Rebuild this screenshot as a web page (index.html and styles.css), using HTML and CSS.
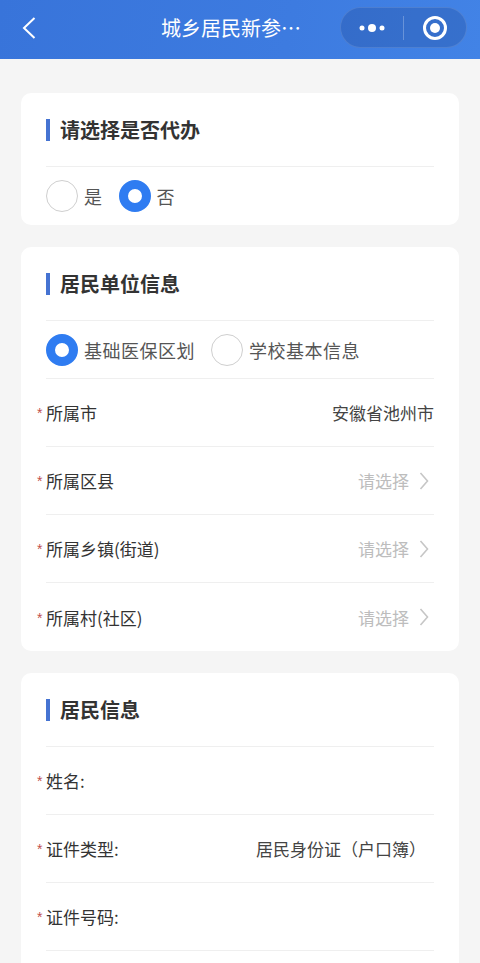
FILE: index.html
```html
<!DOCTYPE html>
<html>
<head>
    <title>城乡居民新参保登记</title>
    <link rel="stylesheet" href="styles.css">
</head>
<body>
    <div class="navbar">
        <svg class="back" width="14" height="22" viewBox="0 0 14 22">
            <polyline points="12.5,1 2,11 12.5,21" fill="none" stroke="#fff" stroke-width="2"/>
        </svg>
        <div class="nav-title">城乡居民新参…</div>
        <div class="capsule">
            <div class="capsule-btn">
                <svg width="26" height="10" viewBox="0 0 26 10">
                    <circle cx="3" cy="5" r="2.5" fill="#fff"/>
                    <circle cx="13" cy="5" r="4" fill="#fff"/>
                    <circle cx="23" cy="5" r="2.5" fill="#fff"/>
                </svg>
            </div>
            <div class="capsule-line"></div>
            <div class="capsule-btn">
                <svg width="26" height="26" viewBox="0 0 26 26">
                    <circle cx="13" cy="13" r="10.5" fill="none" stroke="#fff" stroke-width="3"/>
                    <circle cx="13" cy="13" r="5" fill="#fff"/>
                </svg>
            </div>
        </div>
    </div>

    <div class="page">
        <!-- 是否代办 -->
        <div class="card">
            <div class="card-title"><span class="bar"></span>请选择是否代办</div>
            <div class="radio-row">
                <span class="radio"></span><span class="radio-text">是</span>
                <span class="radio checked"></span><span class="radio-text">否</span>
            </div>
        </div>

        <!-- 居民单位信息 -->
        <div class="card">
            <div class="card-title"><span class="bar"></span>居民单位信息</div>
            <div class="radio-row line">
                <span class="radio checked"></span><span class="radio-text">基础医保区划</span>
                <span class="radio"></span><span class="radio-text">学校基本信息</span>
            </div>
            <div class="row">
                <div class="label"><span class="star">*</span>所属市</div>
                <div class="value">安徽省池州市</div>
            </div>
            <div class="row">
                <div class="label"><span class="star">*</span>所属区县</div>
                <div class="picker">请选择<svg width="10" height="18" viewBox="0 0 10 18"><polyline points="1.5,1 8.5,9 1.5,17" fill="none" stroke="#c6c6c6" stroke-width="1.6"/></svg></div>
            </div>
            <div class="row">
                <div class="label"><span class="star">*</span>所属乡镇(街道)</div>
                <div class="picker">请选择<svg width="10" height="18" viewBox="0 0 10 18"><polyline points="1.5,1 8.5,9 1.5,17" fill="none" stroke="#c6c6c6" stroke-width="1.6"/></svg></div>
            </div>
            <div class="row">
                <div class="label"><span class="star">*</span>所属村(社区)</div>
                <div class="picker">请选择<svg width="10" height="18" viewBox="0 0 10 18"><polyline points="1.5,1 8.5,9 1.5,17" fill="none" stroke="#c6c6c6" stroke-width="1.6"/></svg></div>
            </div>
        </div>

        <!-- 居民信息 -->
        <div class="card card-more">
            <div class="card-title"><span class="bar"></span>居民信息</div>
            <div class="row line">
                <div class="label"><span class="star">*</span>姓名:</div>
                <div class="value"></div>
            </div>
            <div class="row line">
                <div class="label"><span class="star">*</span>证件类型:</div>
                <div class="value type">居民身份证（户口簿）</div>
            </div>
            <div class="row line">
                <div class="label"><span class="star">*</span>证件号码:</div>
                <div class="value"></div>
            </div>
        </div>
    </div>
</body>
</html>
```

FILE: styles.css
```css
body {
    margin: 0;
    padding: 0;
    background-color: #f5f5f5;
    font-family: "Noto Sans CJK SC", "Noto Sans", sans-serif;
    color: #333;
}

/* 顶部导航 */
.navbar {
    height: 59px;
    box-sizing: border-box;
    padding-bottom: 4px;
    display: flex;
    align-items: center;
    background: linear-gradient(100deg, #3874da 0%, #3d7be0 60%, #4283e6 100%);
}
.back {
    margin-left: 22px;
    flex-shrink: 0;
}
.nav-title {
    margin-left: 125px;
    white-space: nowrap;
    color: #fff;
    font-size: 20px;
    line-height: 28px;
}
.capsule {
    margin-left: auto;
    margin-right: 13px;
    width: 127px;
    height: 41px;
    box-sizing: border-box;
    border-radius: 21px;
    background-color: rgba(20, 50, 120, 0.22);
    border: 1px solid rgba(255, 255, 255, 0.12);
    display: flex;
    align-items: center;
}
.capsule-btn {
    flex: 1;
    display: flex;
    justify-content: center;
    align-items: center;
}
.capsule-line {
    width: 1px;
    height: 24px;
    background-color: rgba(255, 255, 255, 0.25);
}

/* 内容 */
.page {
    padding: 34px 21px 0;
}
.card {
    background-color: #fff;
    border-radius: 10px;
    padding: 0 25px;
    margin-bottom: 22px;
}
.card-more {
    padding-bottom: 40px;
}
.card-title {
    height: 74px;
    box-sizing: border-box;
    border-bottom: 1px solid #efefef;
    display: flex;
    align-items: center;
    font-size: 20px;
    font-weight: bold;
    color: #333;
}
.bar {
    width: 4px;
    height: 22px;
    background-color: #4573d2;
    margin-right: 10px;
}

.radio-row {
    height: 58px;
    box-sizing: border-box;
    display: flex;
    align-items: center;
}
.radio-row.line {
    border-bottom: 1px solid #efefef;
}
.radio {
    width: 32px;
    height: 32px;
    box-sizing: border-box;
    border-radius: 50%;
    border: 1.5px solid #cfcfcf;
    background-color: #fff;
}
.radio.checked {
    border: 9px solid #2f7cf1;
}
.radio-text {
    margin-left: 6px;
    margin-right: 16px;
    font-size: 18px;
    letter-spacing: 0.5px;
    color: #555;
}

.row {
    height: 68px;
    box-sizing: border-box;
    display: flex;
    align-items: center;
    justify-content: space-between;
    border-bottom: 1px solid #efefef;
}
.card .row:last-child {
    border-bottom: none;
}
.card .row.line {
    border-bottom: 1px solid #efefef;
}
.label {
    font-size: 17px;
    color: #333;
}
.star {
    display: inline-block;
    width: 9px;
    margin-left: -9px;
    font-family: "Liberation Sans", sans-serif;
    font-size: 14px;
    color: #c0504d;
    vertical-align: 2px;
}
.value {
    font-size: 17px;
    color: #444;
}
.value.type {
    margin-right: 8px;
}
.picker {
    display: flex;
    align-items: center;
    font-size: 17px;
    color: #bdbdbd;
}
.picker svg {
    margin-left: 10px;
    margin-right: 5px;
}
```
